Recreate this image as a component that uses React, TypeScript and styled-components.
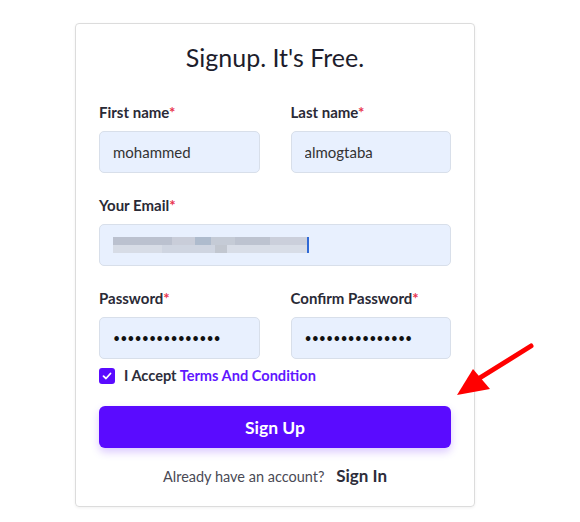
import React from 'react';
import styled, { createGlobalStyle } from 'styled-components';

const GlobalStyles = createGlobalStyle`
body, html {
  margin: 0;
  padding: 0;
  background: #fff;
  font-family: Lato, "Noto Sans", sans-serif;
  color: #262636;
}
`

const Page = styled.div`
  position: relative;
  width: 580px;
  height: 522px;
  padding: 23px 0 0 75px;
  box-sizing: border-box;
`

const Card = styled.form`
  width: 400px;
  box-sizing: border-box;
  border: 1px solid #dcdcdc;
  border-radius: 4px;
  box-shadow: 0 1px 3px rgba(0, 0, 0, 0.06);
  padding: 16px 23px 19px;
  display: flex;
  flex-direction: column;
`

const Title = styled.h1`
  margin: 0 0 28px;
  font-size: 25px;
  line-height: 34px;
  font-weight: 400;
  text-align: center;
  color: #1d1d2c;
`

const Row = styled.div<{ $single?: boolean; $gap?: number }>`
  display: grid;
  grid-template-columns: ${p => (p.$single ? '1fr' : '1fr 1fr')};
  column-gap: 31px;
  margin-bottom: ${p => p.$gap ?? 22}px;
`

const Field = styled.div`
  display: flex;
  flex-direction: column;
  position: relative;
`

const Label = styled.label`
  font-size: 15px;
  line-height: 20px;
  font-weight: 700;
  color: #2a2a36;
  margin-bottom: 9px;
`

const Star = styled.span`
  color: #e8334e;
`

const Input = styled.input`
  height: 42px;
  box-sizing: border-box;
  border: 1px solid #d8dfea;
  border-radius: 5px;
  background: #e8f0fe;
  padding: 0 13px;
  font-family: inherit;
  font-size: 15px;
  color: #333;
  outline: none;
  width: 100%;

  &[type='password'] {
    font-size: 12.4px;
    color: #111;
  }
`

const Blur = styled.span`
  position: absolute;
  left: 14px;
  bottom: 13px;
  width: 196px;
  height: 16px;
  background:
    linear-gradient(90deg, #b7bccb 0 30%, #c6cad6 30% 42%, #a8b6c8 42% 50%, #c2c7d2 50% 62%, #b9bfcc 62% 80%, #c8ccd8 80% 99%, #1d5bd1 99% 100%) top / 100% 50% no-repeat,
    linear-gradient(90deg, #d6dae4 0 25%, #cdd3de 25% 52%, #bec3cc 52% 58%, #d7dbe5 58% 99%, #1d5bd1 99% 100%) bottom / 100% 50% no-repeat;
  opacity: 0.9;
`

const CheckRow = styled.label`
  display: flex;
  align-items: center;
  gap: 9px;
  font-size: 14.6px;
  font-weight: 700;
  color: #2e2e3a;
  line-height: 20px;
  margin-bottom: 20px;
`

const CheckBox = styled.span`
  width: 16px;
  height: 16px;
  border-radius: 3px;
  background: #5a0bff;
  display: flex;
  align-items: center;
  justify-content: center;
`

const Link = styled.a`
  color: #5f17ff;
  text-decoration: none;
`

const Button = styled.button`
  height: 42px;
  border: none;
  border-radius: 6px;
  background: #5a0bff;
  color: #fff;
  font-family: inherit;
  font-size: 17.5px;
  font-weight: 700;
  box-shadow: 0 4px 8px rgba(90, 11, 255, 0.22);
  margin-bottom: 18px;
`

const Footer = styled.p`
  margin: 0;
  text-align: center;
  font-size: 14.5px;
  line-height: 20px;
  color: #4a4a55;
`

const SignIn = styled.a`
  font-size: 17px;
  font-weight: 700;
  color: #2d2d3a;
  margin-left: 8px;
`

const Arrow = styled.svg`
  position: absolute;
  left: 0;
  top: 0;
  pointer-events: none;
`

export default function App() {
  return (
    <>
      <GlobalStyles />
      <Page>
        <Card onSubmit={e => e.preventDefault()}>
          <Title>Signup. It's Free.</Title>
          <Row>
            <Field>
              <Label>First name<Star>*</Star></Label>
              <Input defaultValue="mohammed" />
            </Field>
            <Field>
              <Label>Last name<Star>*</Star></Label>
              <Input defaultValue="almogtaba" />
            </Field>
          </Row>
          <Row $single>
            <Field>
              <Label>Your Email<Star>*</Star></Label>
              <Input type="email" />
              <Blur />
            </Field>
          </Row>
          <Row $gap={7}>
            <Field>
              <Label>Password<Star>*</Star></Label>
              <Input type="password" defaultValue="mohammed1234567" />
            </Field>
            <Field>
              <Label>Confirm Password<Star>*</Star></Label>
              <Input type="password" defaultValue="mohammed1234567" />
            </Field>
          </Row>
          <CheckRow>
            <CheckBox>
              <svg width="10" height="8" viewBox="0 0 10 8">
                <path d="M1.5 4.2 L4 6.5 L8.5 1.5" stroke="#fff" strokeWidth="1.8" fill="none" strokeLinecap="round" strokeLinejoin="round" />
              </svg>
            </CheckBox>
            <span>I Accept <Link href="#">Terms And Condition</Link></span>
          </CheckRow>
          <Button type="submit">Sign Up</Button>
          <Footer>
            Already have an account? <SignIn>Sign In</SignIn>
          </Footer>
        </Card>
        <Arrow width="580" height="522">
          <line x1="531" y1="346" x2="478" y2="379" stroke="#ff0000" strokeWidth="5" strokeLinecap="round" />
          <polygon points="457,395 473,369 490,389" fill="#ff0000" />
        </Arrow>
      </Page>
    </>
  );
}
